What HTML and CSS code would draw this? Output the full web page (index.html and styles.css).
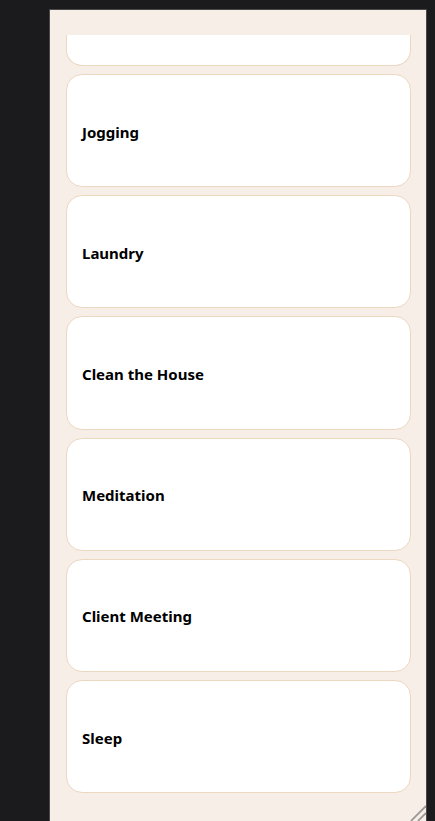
FILE: index.html
```html
<!DOCTYPE html>
<html lang="en">
<head>
<meta charset="utf-8">
<title>Tasks</title>
<link rel="stylesheet" href="styles.css">
</head>
<body>
<div class="panel">
  <div class="list">
    <div class="card card-partial"></div>
    <div class="card"><span class="title">Jogging</span></div>
    <div class="card"><span class="title">Laundry</span></div>
    <div class="card"><span class="title">Clean the House</span></div>
    <div class="card"><span class="title">Meditation</span></div>
    <div class="card"><span class="title">Client Meeting</span></div>
    <div class="card"><span class="title">Sleep</span></div>
  </div>
  <svg class="grip" width="17" height="17" viewBox="0 0 17 17" aria-hidden="true">
    <line x1="17" y1="2" x2="2" y2="17" stroke="#9c9a98" stroke-width="1.8"/>
    <line x1="17" y1="9" x2="9" y2="17" stroke="#9c9a98" stroke-width="1.8"/>
  </svg>
</div>
</body>
</html>
```

FILE: styles.css
```css
html, body {
  margin: 0;
  padding: 0;
  background: #1b1b1d;
  height: 100%;
  overflow: hidden;
}

.panel {
  position: relative;
  box-sizing: border-box;
  margin: 9px 0 0 49px;
  width: 378px;
  height: calc(100vh - 9px);
  background: #f6eee7;
  border: 1px solid #48484a;
  border-bottom: none;
  padding: 25px 15px 0 16px;
  overflow: hidden;
}

.list {
  display: flex;
  flex-direction: column;
  gap: 8px;
}

.card {
  box-sizing: border-box;
  height: 113.2px;
  background: #ffffff;
  border: 1px solid #ecd7c0;
  border-radius: 16px;
  padding: 2px 15px 0;
  display: flex;
  align-items: center;
}

.card-partial {
  height: 31px;
  border-top: none;
  border-radius: 0 0 16px 16px;
}

.title {
  font-family: "Noto Sans", "Open Sans", sans-serif;
  font-weight: 700;
  font-size: 15px;
  color: #000000;
}

.grip {
  position: absolute;
  right: 0;
  bottom: 0;
}
```
